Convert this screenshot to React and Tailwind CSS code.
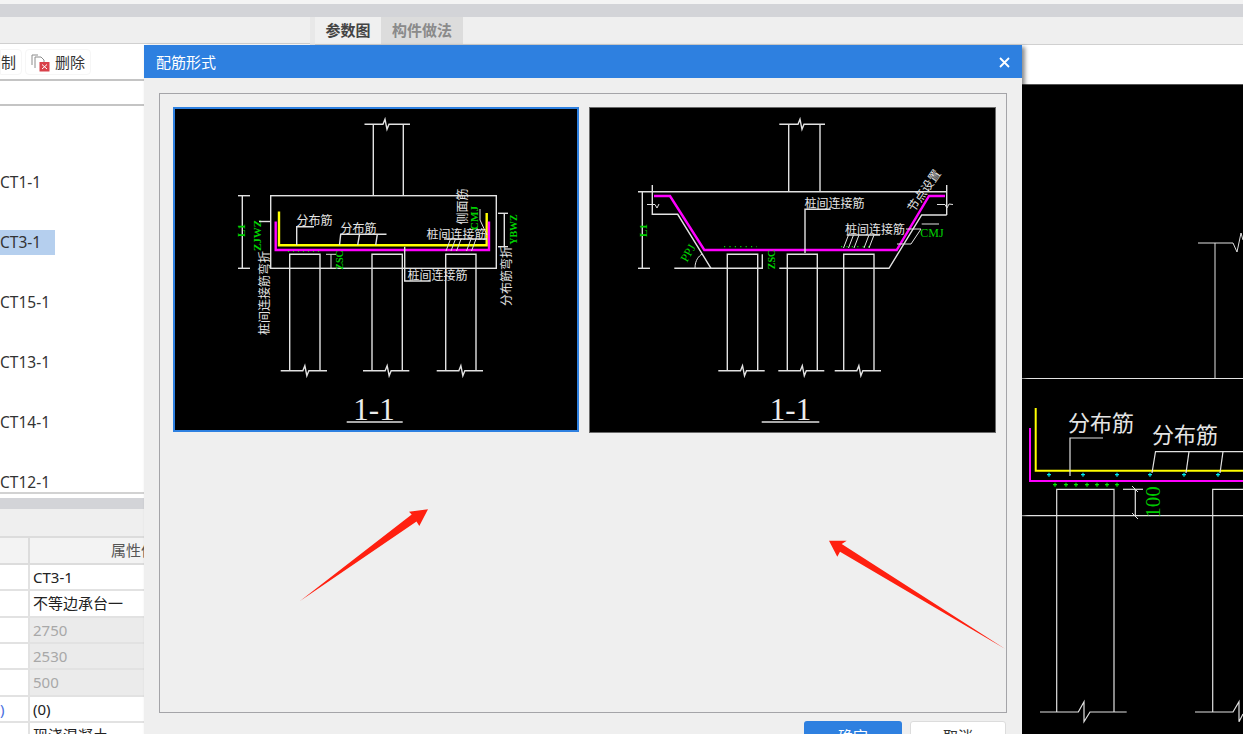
const WHITE = "#e2e2e2";
const GREEN = "#00d000";
const SANS = "'Noto Sans CJK SC', sans-serif";
const SERIF = "'Liberation Serif', serif";

const Line = ({ p, c = WHITE, w = 1.4 }) => (
  <polyline points={p} fill="none" stroke={c} strokeWidth={w} />
);

// horizontal line with the little break mark in the middle
const BreakLine = ({ x1, x2, y, m = (x1 + x2) / 2, h = 5, w = 1.4 }) => (
  <Line
    w={w}
    p={`${x1},${y} ${m - 3},${y} ${m - 1},${y - h} ${m + 1},${y + h} ${m + 3},${y} ${x2},${y}`}
  />
);

const Label = ({ x, y, rot, size = 12, c = "#e4e4e4", font = SANS, bold, children }) => (
  <text
    x={x}
    y={y}
    fill={c}
    fontSize={size}
    fontFamily={font}
    fontWeight={bold ? 700 : 400}
    textAnchor="middle"
    dominantBaseline="central"
    transform={rot ? `rotate(${rot} ${x} ${y})` : undefined}
  >
    {children}
  </text>
);

const Pile = ({ x1, x2, top = 254.3, bottom = 370.7 }) => (
  <>
    <Line p={`${x1},${bottom} ${x1},${top} ${x2},${top} ${x2},${bottom}`} />
    <BreakLine x1={x1 - 9} x2={x2 + 7} y={bottom} m={(x1 + x2) / 2 + 1} />
  </>
);

const Ticks = ({ list }) => (
  <>
    {list.map(([a, b, c, d]) => (
      <Line key={`${a}-${b}-${c}`} p={`${a},${b} ${c},${d}`} w={1} />
    ))}
  </>
);

const DrawingOne = () => (
  <svg viewBox="175 109 402 321" className="block w-full h-full">
    <BreakLine x1={364.5} x2={410} y={124.3} m={386} />
    <Line p="373.3,124.3 373.3,195.7" />
    <Line p="403.3,124.3 403.3,195.7" />
    <rect x="270.7" y="195.7" width="225.6" height="72.6" fill="none" stroke={WHITE} strokeWidth="1.4" />
    <Line p="279,211.5 279,245.3 486.7,245.3 486.7,213" c="#ffff00" w={2.4} />
    <Line p="275.7,221.5 275.7,250 489,250 489,221.5" c="#ff00ff" w={2.4} />
    <line x1="288" y1="251.5" x2="322" y2="251.5" stroke={GREEN} strokeWidth="1" strokeDasharray="1 4" />
    <Pile x1={289.7} x2={320} />
    <Pile x1={372} x2={402.3} />
    <Pile x1={445.7} x2={476} />
    <Line p="242.3,195.7 242.3,268.3" />
    <Line p="238,195.7 250,195.7" />
    <Line p="238,268.3 250,268.3" />
    <Label x={240.5} y={230.5} rot={-90} c={GREEN} size={11} font={SERIF} bold>L1</Label>
    <Label x={257} y={235.5} rot={-90} c={GREEN} size={11} font={SERIF} bold>ZJWZ</Label>
    <Line p="259,221.5 270,221.5" />
    <Label x={263.5} y={293} rot={-90}>桩间连接筋弯折</Label>
    <Label x={314.5} y={219}>分布筋</Label>
    <Line p="314,226.7 296.7,226.7 296.7,245" />
    <Label x={358.5} y={227}>分布筋</Label>
    <Line p="386.5,234.3 340.7,234.3 339.5,245" />
    <Line p="359.5,234.3 357.7,245" />
    <Line p="377.3,234.3 375.7,245" />
    <Label x={456.5} y={233}>桩间连接筋</Label>
    <Line p="444,239 487,239" />
    <Ticks
      list={[
        [450.5, 239, 446, 251],
        [455.5, 239, 451, 251],
        [461, 239, 456.5, 251],
        [471, 239, 466.5, 251],
        [476, 239, 471.5, 251],
      ]}
    />
    <Label x={461} y={206.5} rot={-90}>侧面筋</Label>
    <Label x={474} y={218} rot={-90} c={GREEN} size={11} font={SERIF} bold>CMJ</Label>
    <Line p="480,209 480,220 487,235" w={1} />
    <Line p="504.3,213.3 504.3,246.7" />
    <Line p="498,213.3 508,213.3" />
    <Line p="498,246.7 508,246.7" />
    <Label x={513} y={229.5} rot={-90} c={GREEN} size={10} font={SERIF} bold>YBWZ</Label>
    <Label x={505} y={276} rot={-90}>分布筋弯折</Label>
    <Line p="331,254.3 331,268.3" w={1} />
    <Line p="326,254.3 336,254.3" w={1} />
    <Label x={339} y={260} rot={-90} c={GREEN} size={10} font={SERIF} bold>ZSC</Label>
    <Label x={437.5} y={274}>桩间连接筋</Label>
    <Line p="404.7,246.7 404.7,281 430.7,281" />
    <Label x={374} y={409} size={31} font={SERIF} c="#ececec">1-1</Label>
    <Line p="346.7,422 402.7,422" />
  </svg>
);

const DrawingTwo = () => (
  <svg viewBox="590 108 405 324" className="block w-full h-full">
    <BreakLine x1={779.3} x2={825} y={124.3} m={801} />
    <Line p="788.7,124.3 788.7,191.7" />
    <Line p="820,124.3 820,191.7" />
    <Line p="638,191.7 946,191.7" />
    <Line p="642.3,191.7 642.3,268.3" />
    <Line p="638,268.3 650,268.3" />
    <Label x={643} y={230.5} rot={-90} c={GREEN} size={11} font={SERIF} bold>L1</Label>
    <Line p="652.3,185 652.3,215" />
    <Line p="652.3,214.3 677.7,214.3 711,268.3" />
    <Line p="647,204.5 655,204.5 657,208 659,204" w={1} />
    <Line p="674.3,268.3 762.3,268.3 762.3,254.3" />
    <Line p="779.3,268.3 889,268.3 921.7,215 946.7,215" />
    <Line p="946.7,185 946.7,215" />
    <Line p="937,204.5 945,204.5 947,208 949,204 953,204.5" w={1} />
    <Line p="654,196 670,196 704.3,250 896.7,250 929,196 945,196" c="#ff00ff" w={2.4} />
    <line x1="724" y1="246.7" x2="757" y2="246.7" stroke={GREEN} strokeWidth="1.2" strokeDasharray="1.2 4.2" />
    <line x1="841" y1="246.7" x2="873" y2="246.7" stroke={GREEN} strokeWidth="1.2" strokeDasharray="1.2 4.2" />
    <Pile x1={727.3} x2={757.7} />
    <Pile x1={787.3} x2={817.3} />
    <Pile x1={843.7} x2={874} />
    <Label x={834.5} y={202}>桩间连接筋</Label>
    <Line p="830.7,209.3 805,209.3 805,253" />
    <Label x={875} y={228}>桩间连接筋</Label>
    <Line p="846.7,235 880,235" />
    <Ticks
      list={[
        [848.5, 235, 843.5, 248],
        [853.5, 235, 848.5, 248],
        [859, 235, 854, 248],
        [869, 235, 864, 248],
        [874, 235, 869, 248],
      ]}
    />
    <Label x={923} y={190} rot={-55}>节点设置</Label>
    <Line p="906,229 921,229 911,244 897,244" w={1} />
    <Line p="921.7,224 939,224" w={1} />
    <Label x={932} y={232.5} c={GREEN} size={12} font={SERIF}>CMJ</Label>
    <Label x={688} y={253} rot={-60} c={GREEN} size={12} font={SERIF}>PPJ</Label>
    <path d="M695 268 C695 260 699 256 702 254" fill="none" stroke={WHITE} strokeWidth="1" />
    <Label x={771} y={259.5} rot={-90} c={GREEN} size={10} font={SERIF} bold>ZSC</Label>
    <Label x={790.5} y={409} size={31} font={SERIF} c="#ececec">1-1</Label>
    <Line p="761.7,422 819.3,422" />
  </svg>
);

const plusesCyan = [1049, 1083, 1117, 1150, 1184, 1218];
const plusesGreen = [1055, 1066, 1076, 1087, 1097, 1107, 1117];

const RightDrawing = () => (
  <svg viewBox="1022 85 221 649" className="block w-full h-full">
    <Line p="1198,243 1233,243 1237,252 1241,233 1243,240" w={1} />
    <Line p="1215,243 1215,378" w={1} />
    <Line p="1022,378.5 1243,378.5" w={1} />
    <Line p="1035.7,408 1035.7,470.7 1243,470.7" c="#ffff00" w={2} />
    <Line p="1030,428 1030,481 1243,481" c="#ff00ff" w={2} />
    <Label x={1101} y={423} size={22} font="'Liberation Serif', 'Noto Sans CJK SC', serif">分布筋</Label>
    <Line p="1103,438 1070,438 1070,476" w={1.2} />
    <Label x={1185} y={435} size={22} font="'Liberation Serif', 'Noto Sans CJK SC', serif">分布筋</Label>
    <Line p="1243,451.7 1155.5,451.7 1152,473" w={1.2} />
    <Line p="1189,451.7 1186,473" w={1.2} />
    <Line p="1223,451.7 1220,473" w={1.2} />
    {plusesCyan.map((x) => (
      <path key={x} d={`M${x - 2} 474.7H${x + 2}M${x} 472.7V476.7`} stroke="#00e8e8" strokeWidth="1.2" />
    ))}
    {plusesGreen.map((x) => (
      <path key={x} d={`M${x - 2} 484.7H${x + 2}M${x} 482.7V486.7`} stroke="#00e000" strokeWidth="1.2" />
    ))}
    <Line p="1056.7,712 1056.7,489.3 1114,489.3 1114,712" w={1.2} />
    <Line p="1212.7,712 1212.7,489.3 1243,489.3" w={1.2} />
    <Line p="1022,515.7 1243,515.7" w={1.2} />
    <Line p="1123,489.3 1143,489.3" w={1.2} />
    <Line p="1135.3,489.3 1135.3,515.7" w={1.2} />
    <Line p="1132,486 1138,492" w={1} />
    <Line p="1132,513 1138,519" w={1} />
    <Label x={1152.5} y={502} rot={-90} size={21} c="#00c800" font={SERIF}>100</Label>
    <Line p="1040,712 1078.3,712 1084,701.7 1084,721.7 1090,712 1126.7,712" w={1.2} />
    <Line p="1195,712 1233,712 1239,701.7 1239,721.7 1243,714" w={1.2} />
  </svg>
);

const DeleteIcon = () => (
  <svg width="19" height="19" viewBox="0 0 19 19" className="shrink-0">
    <path d="M1 12V2H7" fill="none" stroke="#8c8c8c" strokeWidth="1" />
    <path d="M4 15V4H10L13 7V9" fill="none" stroke="#8c8c8c" strokeWidth="1" />
    <rect x="8.5" y="9" width="10" height="9.5" fill="#d9414a" />
    <path d="M11 11.5L16 16M16 11.5L11 16" stroke="#fff" strokeWidth="1" />
  </svg>
);

const listItems = ["CT1-1", "CT3-1", "CT15-1", "CT13-1", "CT14-1", "CT12-1"];

const rows = [
  { value: "CT3-1" },
  { value: "不等边承台一" },
  { value: "2750", off: true },
  { value: "2530", off: true },
  { value: "500", off: true },
  { value: "(0)", left: ")" },
  { value: "现浇混凝土" },
];

const LeftPanel = () => (
  <div className="w-[310px] shrink-0 flex flex-col">
    <div className="h-[27px] bg-[#efefef] border-b border-[#d0d0d0] shrink-0" />
    <div className="h-[37px] shrink-0 bg-white border-b-2 border-[#c4c4c4] flex items-center gap-[3px] text-[15px] text-[#333] pt-px">
      <div className="w-[22px] h-[26px] flex items-center border border-[#f6f6f6] rounded-r overflow-hidden">
        <span className="ml-[-15px] whitespace-nowrap">复制</span>
      </div>
      <div className="h-[26px] px-[5px] flex items-center gap-[5px] border border-[#f6f6f6] rounded whitespace-nowrap">
        <DeleteIcon />
        <span>删除</span>
      </div>
    </div>
    <div className="h-[25px] shrink-0 bg-white border-b-2 border-[#c4c4c4]" />
    <div className="h-[388px] shrink-0 overflow-hidden bg-white pt-[64px] border-b-2 border-[#d2d2d2] text-[15.5px] text-[#333]">
      {listItems.map((name) => (
        <div
          key={name}
          className={`h-[25px] mb-[35px] w-[55px] flex items-center whitespace-nowrap ${
            name === "CT3-1" ? "bg-[#b5cfee]" : ""
          }`}
        >
          {name}
        </div>
      ))}
    </div>
    <div className="h-[4px] shrink-0 bg-white" />
    <div className="h-[11px] shrink-0 bg-[#d3d4d8]" />
    <div className="h-[29px] shrink-0 bg-[#efefef] border-b-2 border-[#dcdcdc]" />
    <div className="flex h-[27px] shrink-0 bg-[#f3f3f3] border-b-2 border-[#dcdcdc] text-[15px] text-[#555]">
      <div className="w-[30px] border-r-2 border-[#dcdcdc]" />
      <div className="w-[207px] flex items-center justify-center">属性值</div>
    </div>
    <div className="bg-white text-[15px] text-[#222]">
      {rows.map((row) => (
        <div key={row.value} className="flex h-[26.33px] border-b-2 border-[#e2e2e2]">
          <div className="w-[30px] border-r-2 border-[#e2e2e2] flex items-center text-[#4a6fe0]">{row.left}</div>
          <div
            className={`w-[280px] pl-[3px] flex items-center ${
              row.off ? "bg-[#ebebeb] text-[#a8a8a8]" : ""
            }`}
          >
            {row.value}
          </div>
        </div>
      ))}
    </div>
  </div>
);

const Dialog = () => (
  <div className="absolute left-[144px] top-[45px] w-[878px] h-[689px] bg-[#efefef] shadow-[3px_2px_4px_rgba(0,0,0,0.45)] flex flex-col">
    <div className="h-[33px] bg-[#2e80e0] flex items-center justify-between pl-[12px] pr-[12px] pt-px text-white text-[15px] shrink-0">
      <span>配筋形式</span>
      <svg width="11" height="11" viewBox="0 0 11 11">
        <path d="M1 1L10 10M10 1L1 10" stroke="#fff" strokeWidth="1.8" />
      </svg>
    </div>
    <div className="px-[15px] pt-[15px]">
      <div className="w-[848px] h-[620px] border border-[#a4a4a8] p-[13px] flex gap-[10px] items-start">
        <div className="w-[406px] h-[325px] shrink-0 border-2 border-[#2e80e0] bg-black">
          <DrawingOne />
        </div>
        <div className="w-[407px] h-[326px] shrink-0 border border-[#6a6a6a] bg-black">
          <DrawingTwo />
        </div>
      </div>
    </div>
    <div className="flex justify-end gap-[8px] pr-[16px] pt-[8px] text-[15px]">
      <button className="w-[98px] h-[30px] rounded-[3px] bg-[#2e80e0] text-white">确定</button>
      <button className="w-[96px] h-[30px] rounded-[3px] bg-white border border-[#dcdcdc] text-[#333]">取消</button>
    </div>
  </div>
);

export default function App() {
  return (
    <div className="relative w-[1243px] h-[734px] overflow-hidden bg-white font-['Noto_Sans','Noto_Sans_CJK_SC',sans-serif] flex flex-col">
      <div className="h-[4px] bg-[#f4f4f4] shrink-0" />
      <div className="h-[13px] bg-[#d3d4d8] shrink-0" />
      <div className="flex flex-1 min-h-0">
        <LeftPanel />
        <div className="w-[5px] bg-[#e8e8e8] shrink-0" />
        <div className="flex-1 flex flex-col min-w-0">
          <div className="h-[28px] bg-[#efefef] border-b border-[#d0d0d0] flex text-[15px] font-bold shrink-0">
            <div className="w-[66px] flex items-center justify-center bg-[#f0f0f0] text-[#444]">参数图</div>
            <div className="w-[82px] flex items-center justify-center bg-[#dcdcdc] text-[#8a8a8a]">构件做法</div>
          </div>
          <div className="h-[40px] bg-white border-b border-[#555] shrink-0" />
          <div className="flex-1 bg-black flex justify-end min-h-0">
            <div className="w-[221px] h-[649px]">
              <RightDrawing />
            </div>
          </div>
        </div>
      </div>
      <Dialog />
      <svg viewBox="0 0 1243 734" className="absolute inset-0 w-full h-full pointer-events-none">
        <polygon points="300,601 411.7,514.5 409,511.7 428,509.3 419.3,526 416.5,521.5" fill="#ff2010" />
        <polygon points="1005.3,649 841.7,544 846.7,540.7 829,540.7 837.3,556.7 840,551.7" fill="#ff2010" />
      </svg>
    </div>
  );
}
